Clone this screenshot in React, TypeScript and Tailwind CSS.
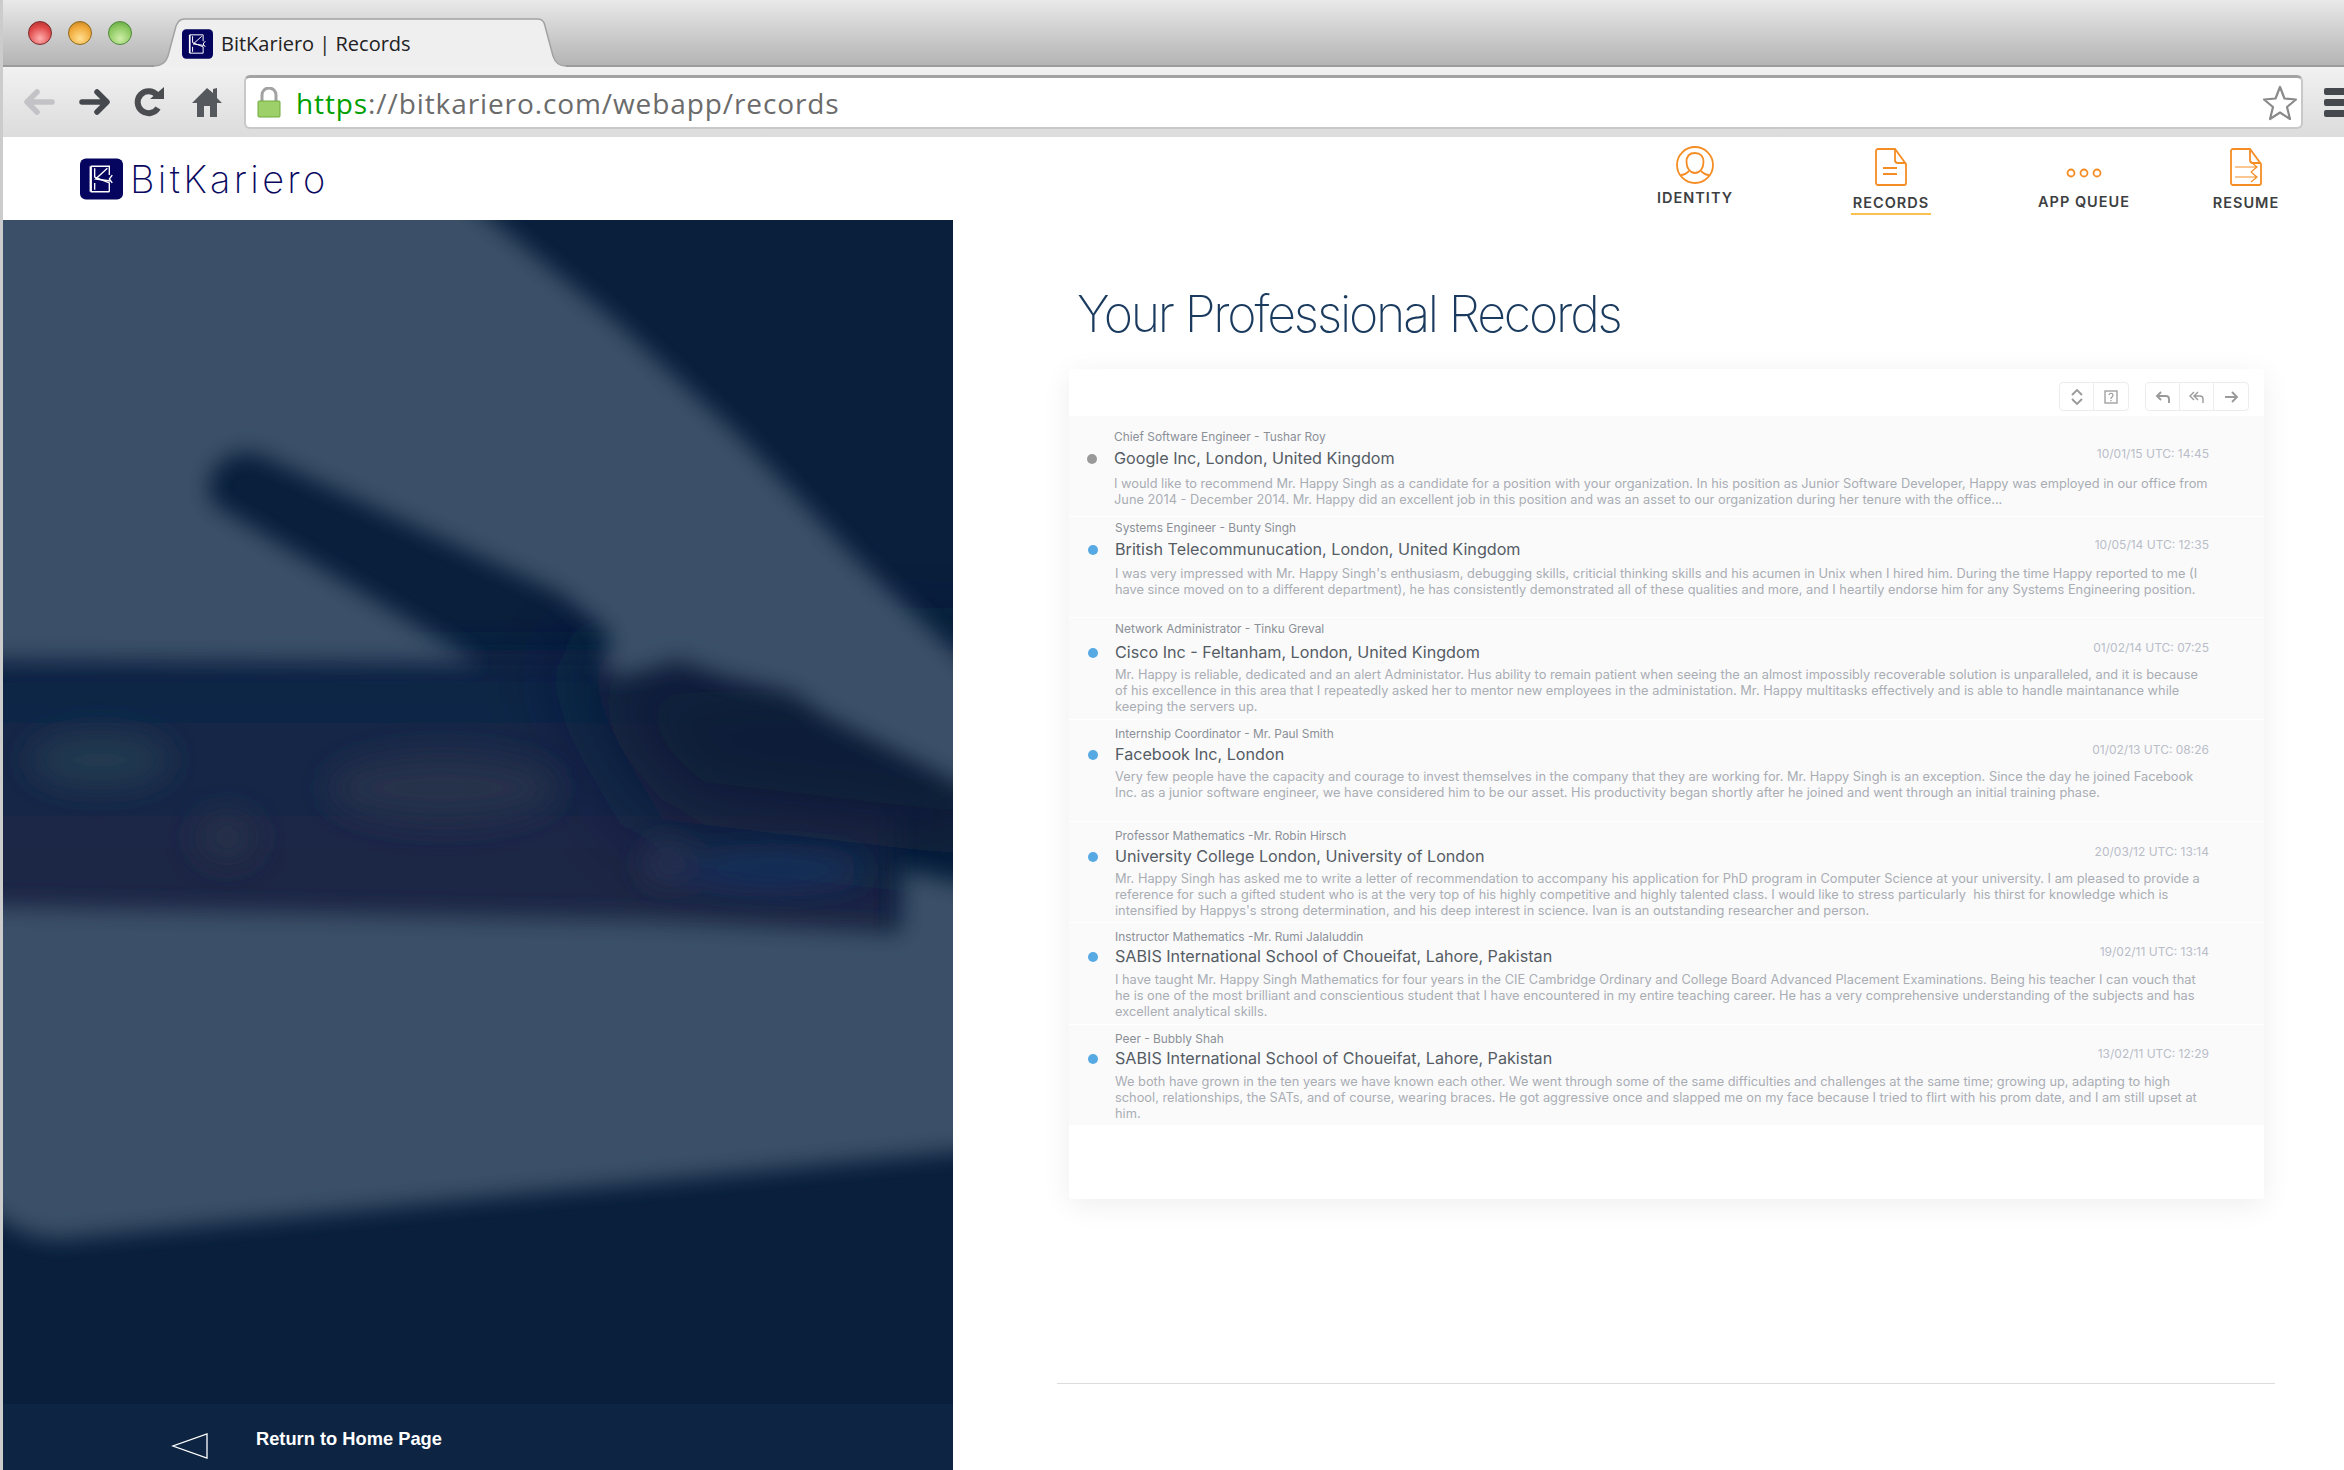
import React from "react";

const rows = [
  {
    label: "Chief Software Engineer - Tushar Roy",
    title: "Google Inc, London, United Kingdom",
    date: "10/01/15 UTC: 14:45",
    dot: "bg-[#999999]",
    box: "h-[100px] pt-[14px] pl-[18px]",
    gap: "mt-[3px]",
    bodyGap: "mt-[7px]",
    lines: [
      "I would like to recommend Mr. Happy Singh as a candidate for a position with your organization. In his position as Junior Software Developer, Happy was employed in our office from",
      "June 2014 - December 2014. Mr. Happy did an excellent job in this position and was an asset to our organization during her tenure with the office...",
    ],
  },
  {
    label: "Systems Engineer - Bunty Singh",
    title: "British Telecommunucation, London, United Kingdom",
    date: "10/05/14 UTC: 12:35",
    dot: "bg-[#56a9e2]",
    box: "h-[100px] pt-[4px] pl-[19px]",
    gap: "mt-[3px]",
    bodyGap: "mt-[6px]",
    lines: [
      "I was very impressed with Mr. Happy Singh's enthusiasm, debugging skills, criticial thinking skills and his acumen in Unix when I hired him. During the time Happy reported to me (I",
      "have since moved on to a different department), he has consistently demonstrated all of these qualities and more, and I heartily endorse him for any Systems Engineering position.",
    ],
  },
  {
    label: "Network Administrator - Tinku Greval",
    title: "Cisco Inc - Feltanham, London, United Kingdom",
    date: "01/02/14 UTC: 07:25",
    dot: "bg-[#56a9e2]",
    box: "h-[101px] pt-[4px] pl-[19px]",
    gap: "mt-[5px]",
    bodyGap: "mt-[4px]",
    lines: [
      "Mr. Happy is reliable, dedicated and an alert Administator. Hus ability to remain patient when seeing the an almost impossibly recoverable solution is unparalleled, and it is because",
      "of his excellence in this area that I repeatedly asked her to mentor new employees in the administation. Mr. Happy multitasks effectively and is able to handle maintanance while",
      "keeping the servers up.",
    ],
  },
  {
    label: "Internship Coordinator - Mr. Paul Smith",
    title: "Facebook Inc, London",
    date: "01/02/13 UTC: 08:26",
    dot: "bg-[#56a9e2]",
    box: "h-[101px] pt-[7px] pl-[19px]",
    gap: "mt-[2px]",
    bodyGap: "mt-[4px]",
    lines: [
      "Very few people have the capacity and courage to invest themselves in the company that they are working for. Mr. Happy Singh is an exception. Since the day he joined Facebook",
      "Inc. as a junior software engineer, we have considered him to be our asset. His productivity began shortly after he joined and went through an initial training phase.",
    ],
  },
  {
    label: "Professor Mathematics -Mr. Robin Hirsch",
    title: "University College London, University of London",
    date: "20/03/12 UTC: 13:14",
    dot: "bg-[#56a9e2]",
    box: "h-[100px] pt-[7px] pl-[19px]",
    gap: "mt-[2px]",
    bodyGap: "mt-[4px]",
    lines: [
      "Mr. Happy Singh has asked me to write a letter of recommendation to accompany his application for PhD program in Computer Science at your university. I am pleased to provide a",
      "reference for such a gifted student who is at the very top of his highly competitive and highly talented class. I would like to stress particularly  his thirst for knowledge which is",
      "intensified by Happys's strong determination, and his deep interest in science. Ivan is an outstanding researcher and person.",
    ],
  },
  {
    label: "Instructor Mathematics -Mr. Rumi Jalaluddin",
    title: "SABIS International School of Choueifat, Lahore, Pakistan",
    date: "19/02/11 UTC: 13:14",
    dot: "bg-[#56a9e2]",
    box: "h-[101px] pt-[7px] pl-[19px]",
    gap: "mt-[1px]",
    bodyGap: "mt-[5px]",
    lines: [
      "I have taught Mr. Happy Singh Mathematics for four years in the CIE Cambridge Ordinary and College Board Advanced Placement Examinations. Being his teacher I can vouch that",
      "he is one of the most brilliant and conscientious student that I have encountered in my entire teaching career. He has a very comprehensive understanding of the subjects and has",
      "excellent analytical skills.",
    ],
  },
  {
    label: "Peer - Bubbly Shah",
    title: "SABIS International School of Choueifat, Lahore, Pakistan",
    date: "13/02/11 UTC: 12:29",
    dot: "bg-[#56a9e2]",
    box: "h-[100px] pt-[7px] pl-[19px]",
    gap: "mt-[1px]",
    bodyGap: "mt-[5px]",
    lines: [
      "We both have grown in the ten years we have known each other. We went through some of the same difficulties and challenges at the same time; growing up, adapting to high",
      "school, relationships, the SATs, and of course, wearing braces. He got aggressive once and slapped me on my face because I tried to flirt with his prom date, and I am still upset at",
      "him.",
    ],
  },
];

function LogoMark({ className }: { className: string }) {
  return (
    <svg viewBox="0 0 44 42" className={className}>
      <rect width="44" height="42" rx="6" fill="#05055f" />
      <g fill="none" stroke="#fff" strokeWidth="1.4">
        <path d="M11 8v26" strokeWidth="2.4" />
        <path d="M11 8h19v9M11 34h19" />
        <path d="M15 10v9l15 6v9" />
        <path d="M15 25v7M28 10l-12 11 15 2" />
        <path d="M33 17l-3 4 3 4" />
      </g>
    </svg>
  );
}

function PanelImage() {
  return (
    <svg viewBox="0 0 950 1184" preserveAspectRatio="none" className="w-full h-full block">
      <defs>
        <filter id="soft" x="-10%" y="-10%" width="120%" height="120%">
          <feGaussianBlur stdDeviation="11" />
        </filter>
        <filter id="softer" x="-30%" y="-60%" width="160%" height="220%">
          <feGaussianBlur stdDeviation="16" />
        </filter>
        <filter id="wide" x="-40%" y="-80%" width="180%" height="260%">
          <feGaussianBlur stdDeviation="45" />
        </filter>
        <linearGradient id="band" x1="0" y1="0" x2="0" y2="1">
          <stop offset="0" stopColor="#0c2444" />
          <stop offset="0.45" stopColor="#162748" />
          <stop offset="0.75" stopColor="#1f2545" />
          <stop offset="1" stopColor="#1f2545" />
        </linearGradient>
      </defs>
      <rect width="950" height="1184" fill="#091f3c" />
      <rect x="-60" y="430" width="950" height="290" fill="url(#band)" filter="url(#softer)" />
      <path d="M560 430H1000V640L660 600Z" fill="#091f39" filter="url(#wide)" />
      <g filter="url(#softer)">
        <ellipse cx="97" cy="540" rx="70" ry="26" fill="#223a50" />
        <ellipse cx="224" cy="617" rx="30" ry="24" fill="#27324a" />
        <ellipse cx="440" cy="568" rx="115" ry="34" fill="#27324c" />
        <ellipse cx="664" cy="643" rx="22" ry="18" fill="#2a3552" />
        <ellipse cx="770" cy="650" rx="92" ry="16" fill="#15325f" />
      </g>
      <g filter="url(#soft)" fill="#3b4f67">
        <path d="M-30 440V-30H450L489 0 612 101 735 215 854 340 990 468V580L890 530 824 497 790 473 724 457 674 440 634 453 600 455 607 413 557 373 255 234C215 225 195 265 212 285L477 443Z" />
        <path d="M-30 686L649 700 897 712 900 650 990 672V928L58 1019C20 1019 0 1000 -30 980Z" />
      </g>
    </svg>
  );
}

function FileIcon({ children }: { children: React.ReactNode }) {
  return (
    <svg viewBox="0 0 32 38" className="w-[32px] h-[38px]" fill="none" stroke="#f58d25" strokeWidth="1.8">
      <path d="M3 1h17l11 15v19a2 2 0 0 1-2 2H3a2 2 0 0 1-2-2V3a2 2 0 0 1 2-2z" />
      <path d="M20 1v11a3 3 0 0 0 3 3h8" />
      {children}
    </svg>
  );
}

function ToolButton({ children, last }: { children: React.ReactNode; last?: boolean }) {
  return (
    <div className={last ? "w-[34px] h-full flex items-center justify-center" : "w-[34px] h-full flex items-center justify-center border-r border-[#ececec]"}>
      <svg viewBox="0 0 18 18" className="w-[18px] h-[18px]" fill="none" stroke="#9a9a9a" strokeWidth="1.9">
        {children}
      </svg>
    </div>
  );
}

export default function App() {
  return (
    <div className="w-[2344px] h-[1470px] overflow-hidden flex flex-col border-l-[3px] border-[#cccccc] bg-white font-['Inter',sans-serif]">
      {/* tab strip */}
      <div className="h-[67px] flex items-end pl-[25px] bg-gradient-to-b from-[#e9e9e9] to-[#b4b4b4] border-b-2 border-[#9b9b9b]">
        <div className="flex items-center w-[72px] h-full shrink-0">
          <div className="flex gap-[16px]">
            <span className="w-[24px] h-[24px] shrink-0 rounded-full border border-[#7a2a2a] bg-[radial-gradient(circle_at_50%_75%,#ffb0b0,#e04848_60%,#a82a2a)]" />
            <span className="w-[24px] h-[24px] shrink-0 rounded-full border border-[#8f6a1c] bg-[radial-gradient(circle_at_50%_75%,#ffdf90,#f0a838_60%,#b87a1c)]" />
            <span className="w-[24px] h-[24px] shrink-0 rounded-full border border-[#4f8a38] bg-[radial-gradient(circle_at_50%_75%,#cfeea8,#8cc860_60%,#5a9a3c)]" />
          </div>
        </div>
        <div className="relative w-[412px] h-[49px] ml-[54px] -mb-[2px] shrink-0">
          <svg viewBox="0 0 412 49" className="absolute inset-0 w-full h-full">
            <path d="M0 48C8 48 12 44 14 38L22 8C24 3 26 1 30 1H384C388 1 390 3 391 8L399 38C401 44 404 48 412 48V49H0Z" fill="#efefef" />
            <path d="M0 48C8 48 12 44 14 38L22 8C24 3 26 1 30 1H384C388 1 390 3 391 8L399 38C401 44 404 48 412 48" fill="none" stroke="#a2a2a2" strokeWidth="1.5" />
          </svg>
          <div className="relative h-full flex items-center pl-[28px] pt-[3px] gap-[8px] font-['Open_Sans',sans-serif] text-[20px] text-[#222222]">
            <LogoMark className="w-[31px] h-[32px]" />
            <span>BitKariero | Records</span>
          </div>
        </div>
      </div>

      {/* address bar */}
      <div className="h-[70px] flex items-center bg-gradient-to-b from-[#f1f1f1] to-[#dcdcdc] overflow-hidden">
        <div className="w-[241px] shrink-0 flex items-center pl-[20px]">
          <svg viewBox="0 0 32 28" className="w-[32px] h-[28px]" fill="none" stroke="#c3c3c7" strokeWidth="5.5" strokeLinecap="round" strokeLinejoin="round">
            <path d="M29 14H5M14 4L4 14l10 10" />
          </svg>
          <svg viewBox="0 0 32 28" className="w-[32px] h-[28px] ml-[24px]" fill="none" stroke="#45484c" strokeWidth="5.5" strokeLinecap="round" strokeLinejoin="round">
            <path d="M3 14h24M18 4l10 10-10 10" />
          </svg>
          <svg viewBox="0 0 32 32" className="w-[32px] h-[32px] ml-[23px]" fill="none">
            <path d="M24 22a11 11 0 1 1-1-13" stroke="#4a4c50" strokeWidth="6" />
            <path d="M16 13h14V1z" fill="#4a4c50" />
          </svg>
          <svg viewBox="0 0 32 32" className="w-[32px] h-[32px] ml-[25px]" fill="#55585c">
            <path d="M16 2L1 17h5v14h7V20h6v11h7V17h5l-5-5V2l-4 1v4z" />
          </svg>
        </div>
        <div className="w-[2059px] h-[54px] shrink-0 flex items-center justify-between rounded-[6px] border-2 border-t-[3px] border-[#c8c8c8] border-t-[#a3a3a3] bg-white">
          <div className="flex items-center pl-[11px] font-['Open_Sans',sans-serif] text-[28px] tracking-[0.9px] text-[#6b6b6b]">
            <svg viewBox="0 0 24 31" className="w-[24px] h-[31px]">
              <path d="M5 15V8a7 7 0 0 1 14 0v7" fill="none" stroke="#a2a2a2" strokeWidth="3" />
              <rect x="1" y="14" width="22" height="16" rx="1" fill="#9ed069" stroke="#6faa3f" />
            </svg>
            <span className="ml-[15px]">
              <span className="text-[#00a000]">https</span>://bitkariero.com/webapp/records
            </span>
          </div>
          <svg viewBox="0 0 34 36" className="w-[34px] h-[36px] mr-[4px]" fill="none" stroke="#8a8a8a" strokeWidth="2.2" strokeLinejoin="round">
            <path d="M17 2l4.500 11.500L33 14.500l-9 7.500 3 12-10-6.500L7 34l3-12-9-7.500 11.500-1z" />
          </svg>
        </div>
        <div className="flex flex-col gap-[4px] ml-[21px] w-[30px] shrink-0">
          <span className="h-[7px] rounded-l-[2px] bg-[#45484c]" />
          <span className="h-[7px] rounded-l-[2px] bg-[#45484c]" />
          <span className="h-[7px] rounded-l-[2px] bg-[#45484c]" />
        </div>
      </div>

      {/* site header */}
      <header className="h-[83px] flex shrink-0">
        <div className="flex items-center pl-[77px]">
          <LogoMark className="w-[43px] h-[42px]" />
          <span className="ml-[7px] text-[38px] leading-none font-extralight text-[#08085f] tracking-[3.300px]">BitKariero</span>
        </div>
        <nav className="flex ml-auto pr-[38px] text-[#3d3f42] font-semibold text-[14.500px] tracking-[1px]">
          <div className="w-[120px] flex flex-col items-center pt-[9px]">
            <svg viewBox="0 0 38 38" className="w-[38px] h-[38px]" fill="none" stroke="#f58d25" strokeWidth="1.8">
              <circle cx="19" cy="19" r="18" />
              <path d="M19 7c-5.500 0-8.500 3.500-8.500 9 0 6 3.500 11 8.500 11s8.500-5 8.500-11c0-5.500-3-9-8.500-9z" />
              <path d="M5 29c4 0 6-2 8-4M33 29c-4 0-6-2-8-4" />
            </svg>
            <span className="mt-[6px] leading-[16px]">IDENTITY</span>
          </div>
          <div className="w-[120px] ml-[76px] flex flex-col items-center pt-[11px]">
            <FileIcon>
              <path d="M8 20h14M8 26h14" />
            </FileIcon>
            <span className="mt-[9px] leading-[16px] pb-[2px] px-[2px] border-b-2 border-[#fbc04f]">RECORDS</span>
          </div>
          <div className="w-[120px] ml-[73px] flex flex-col items-center pt-[30px]">
            <svg viewBox="0 0 36 12" className="w-[36px] h-[12px]" fill="none" stroke="#f58d25" strokeWidth="1.8">
              <circle cx="5" cy="6" r="3.500" />
              <circle cx="18" cy="6" r="3.500" />
              <circle cx="31" cy="6" r="3.500" />
            </svg>
            <span className="mt-[15px] leading-[16px]">APP QUEUE</span>
          </div>
          <div className="w-[120px] ml-[42px] flex flex-col items-center pt-[11px]">
            <FileIcon>
              <path d="M5 19h22M21 14l6 5-6 5M5 29h22M21 24l6 5-6 5" strokeWidth="1.2" />
            </FileIcon>
            <span className="mt-[9px] leading-[16px]">RESUME</span>
          </div>
        </nav>
      </header>

      <main className="flex-1 flex min-h-0">
        <div className="w-[950px] shrink-0 flex flex-col bg-[#091f3c]">
          <div className="flex-1 min-h-0 overflow-hidden">
            <PanelImage />
          </div>
          <div className="h-[66px] shrink-0 bg-[#0d2543] flex pl-[168px] pt-[25px]">
            <svg viewBox="0 0 38 28" className="w-[38px] h-[28px] mt-[3px]" fill="none" stroke="#ffffff" strokeWidth="1.3">
              <path d="M36 2v24L2 14z" />
            </svg>
            <span className="ml-[47px] font-['Liberation_Sans',sans-serif] font-bold text-[18.300px] leading-[20px] text-white">Return to Home Page</span>
          </div>
        </div>

        <div className="flex-1 min-w-0 flex flex-col pl-[104px]">
          <h1 className="ml-[20px] mt-[64px] h-[85px] text-[50px] leading-[60px] font-extralight tracking-[-2.2px] text-[#1a3a5e]">
            Your Professional Records
          </h1>
          <section className="ml-[12px] w-[1195px] h-[830px] rounded-[3px] bg-white shadow-[0_6px_30px_rgba(0,0,0,0.07)]">
            <div className="h-[47px] flex justify-end items-start pt-[13px] pr-[15px] gap-[16px]">
              <div className="flex h-[29px] rounded-[4px] border border-[#ececec]">
                <ToolButton>
                  <path d="M4 7l5-5 5 5M4 11l5 5 5-5" />
                </ToolButton>
                <ToolButton last>
                  <rect x="3" y="3" width="12" height="12" strokeWidth="1.300" />
                  <path d="M7 7a2 2 0 1 1 3 2l-1 1v1M9 12v1.200" strokeWidth="1.200" />
                </ToolButton>
              </div>
              <div className="flex h-[29px] rounded-[4px] border border-[#ececec]">
                <ToolButton>
                  <path d="M7 4L3 8l4 4M3 8h9a3 3 0 0 1 3 3v4" />
                </ToolButton>
                <ToolButton>
                  <path d="M6 4L2 8l4 4M10 4L6 8l4 4M6 8h6a3 3 0 0 1 3 3v4" strokeWidth="1.400" />
                </ToolButton>
                <ToolButton last>
                  <path d="M3 9h12M10 4l5 5-5 5" />
                </ToolButton>
              </div>
            </div>
            <div className="flex flex-col gap-px">
              {rows.map((row) => (
                <div key={row.label} className={`${row.box} bg-[#fafafb] pr-[55px]`}>
                  <div className="pl-[27px] text-[11.900px] leading-[14px] text-[#8b9097] whitespace-nowrap">{row.label}</div>
                  <div className={`${row.gap} flex items-center`}>
                    <span className={`${row.dot} w-[10px] h-[10px] rounded-full mr-[17px] mt-[1px] shrink-0`} />
                    <span className="text-[16.150px] leading-[22px] text-[#555c64] whitespace-nowrap">{row.title}</span>
                    <span className="ml-auto -mt-[8px] text-[12px] leading-[16px] text-[#b9bdc8] whitespace-nowrap">{row.date}</span>
                  </div>
                  <div className={`${row.bodyGap} pl-[27px] text-[12.820px] leading-[16px] text-[#a9adb3] whitespace-pre`}>
                    {row.lines.map((line) => (
                      <div key={line}>{line}</div>
                    ))}
                  </div>
                </div>
              ))}
            </div>
          </section>
          <div className="mt-[184px] w-[1218px] h-px bg-[#dcdcdc]" />
        </div>
      </main>
    </div>
  );
}
